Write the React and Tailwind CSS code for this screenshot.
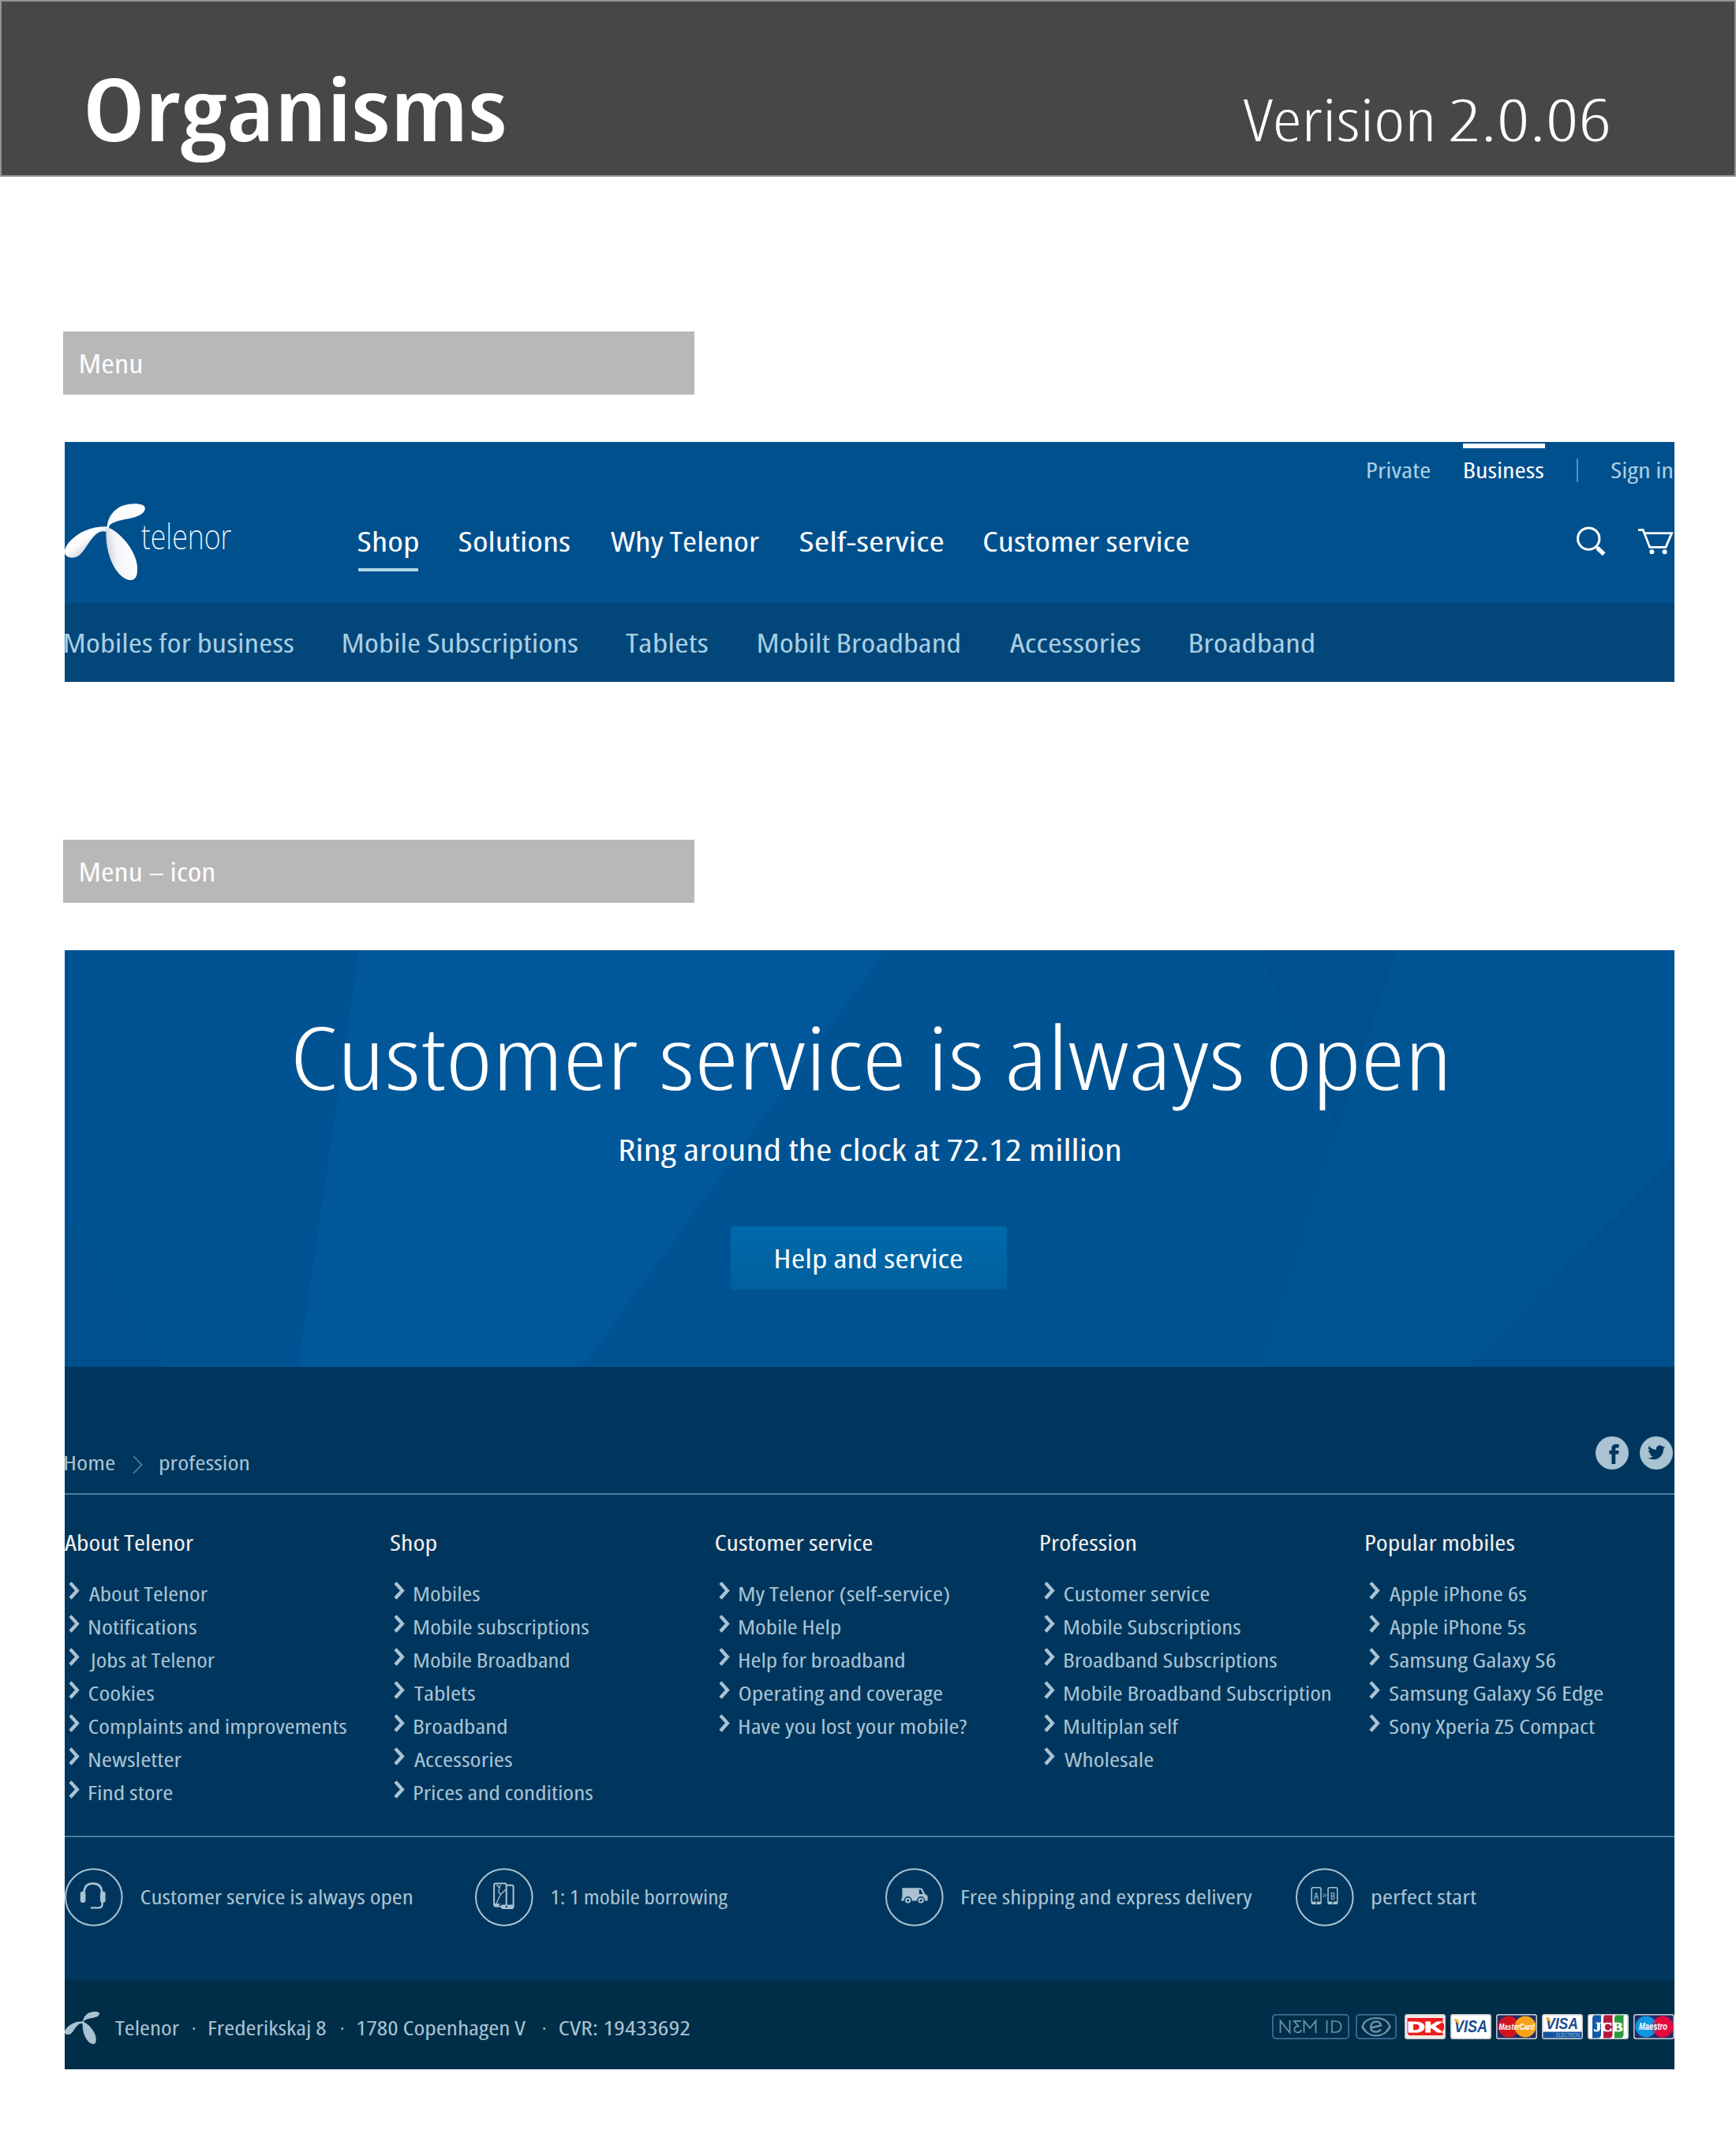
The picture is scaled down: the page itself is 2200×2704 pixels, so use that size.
import { useLayoutEffect, useRef, useState } from "react";

/* Text set to an exact ink width: the glyph run is measured and condensed horizontally. */
function T({ w, dy = 1.5, children, className = "" }) {
  const ref = useRef(null);
  const [fit, setFit] = useState({ x: 0, s: 1 });
  useLayoutEffect(() => {
    const cs = getComputedStyle(ref.current);
    const ctx = document.createElement("canvas").getContext("2d");
    ctx.font = `${cs.fontWeight} 400px ${cs.fontFamily}`;
    ctx.fontStretch = "condensed";
    const m = ctx.measureText(children);
    const k = ref.current.getBoundingClientRect().width / ref.current.dataset.scale / m.width;
    const s = w / ((m.actualBoundingBoxLeft + m.actualBoundingBoxRight) * k);
    setFit({ x: m.actualBoundingBoxLeft * k * s, s });
  }, [w, children]);
  return (
    <span className={`block shrink-0 whitespace-nowrap ${className}`} style={{ width: w }}>
      <span
        ref={ref}
        data-scale={fit.s}
        className="inline-block origin-left align-top"
        style={{ transform: `translate(${fit.x}px, ${dy}px) scaleX(${fit.s})` }}
      >
        {children}
      </span>
    </span>
  );
}

const MAIN = [
  ["Shop", 76],
  ["Solutions", 140],
  ["Why Telenor", 188],
  ["Self-service", 181],
  ["Customer service", 259],
];

const SUB = [
  ["Mobiles for business", 290, ""],
  ["Mobile Subscriptions", 297, "ml-[63px]"],
  ["Tablets", 104, "ml-[61px]"],
  ["Mobilt Broadband", 255, "ml-[64px]"],
  ["Accessories", 165, "ml-[64px]"],
  ["Broadband", 157, "ml-[63px]"],
];

const COLUMNS = [
  ["About Telenor", 163, [["About Telenor", 150], ["Notifications", 136], ["Jobs at Telenor", 159], ["Cookies", 82], ["Complaints and improvements", 326], ["Newsletter", 117], ["Find store", 105]]],
  ["Shop", 58, [["Mobiles", 83], ["Mobile subscriptions", 221], ["Mobile Broadband", 196], ["Tablets", 77], ["Broadband", 117], ["Accessories", 124], ["Prices and conditions", 226]]],
  ["Customer service", 198, [["My Telenor (self-service)", 266], ["Mobile Help", 128], ["Help for broadband", 209], ["Operating and coverage", 257], ["Have you lost your mobile?", 288]]],
  ["Profession", 120, [["Customer service", 183], ["Mobile Subscriptions", 223], ["Broadband Subscriptions", 269], ["Mobile Broadband Subscription", 337], ["Multiplan self", 145], ["Wholesale", 112]]],
  ["Popular mobiles", 188, [["Apple iPhone 6s", 173], ["Apple iPhone 5s", 172], ["Samsung Galaxy S6", 210], ["Samsung Galaxy S6 Edge", 270], ["Sony Xperia Z5 Compact", 260]]],
];

function Helix({ className, shaded }) {
  const a = shaded ? "url(#petalLeft)" : "currentColor";
  const b = shaded ? "url(#petalDown)" : "currentColor";
  const c = shaded ? "#fbfcfe" : "currentColor";
  return (
    <svg className={className} viewBox="43 294 200 291" preserveAspectRatio="none">
      <defs>
        <linearGradient id="petalLeft" x1="0.2" y1="0.2" x2="0.75" y2="0.7">
          <stop offset="0.45" stopColor="#fdfdfe" />
          <stop offset="1" stopColor="#c3c8d3" />
        </linearGradient>
        <linearGradient id="petalDown" x1="0" y1="0.55" x2="0.9" y2="0.35">
          <stop offset="0" stopColor="#c4c9d6" />
          <stop offset="0.35" stopColor="#f3f4f8" />
          <stop offset="1" stopColor="#ffffff" />
        </linearGradient>
      </defs>
      <path fill={c} d="M148 388C149 352 160 325 180 307C200 291 232 291 240 303C247 315 240 332 224 342C204 355 166 356 154 378L153 388Z" />
      <path fill={a} d="M152 382C134 380 112 384 92 398C68 414 46 447 43 472C41 490 50 500 62 500C76 500 84 486 93 466C106 437 115 413 130 402C138 398 146 399 152 406Z" />
      <path fill={b} d="M146 388C144 432 149 488 164 530C175 562 192 584 206 585C222 585 225 560 223 530C220 482 190 415 155 388Z" />
    </svg>
  );
}

function Chevron() {
  return (
    <svg className="mt-[7px] ml-[5px] h-[23px] w-[25px] shrink-0" viewBox="0 0 25 23">
      <path d="M2 1.6L10.8 11.4L2 21.2" fill="none" stroke="#a9c3d3" strokeWidth="4.4" />
    </svg>
  );
}

function SectionLabel({ text, w }) {
  return (
    <div className="h-20 w-[800px] bg-[#b8b8b8] pl-[22px] text-[33px] leading-[78px] text-white">
      <T w={w}>{text}</T>
    </div>
  );
}

function Service({ label, w, children }) {
  return (
    <div className="flex w-[520px] shrink-0">
      <svg className="size-[74px] shrink-0" viewBox="0.6 0 74 74" fill="none" stroke="#a9c3d3">
        <circle cx="37.4" cy="37" r="35.8" strokeWidth="2" />
        {children}
      </svg>
      <T w={w} dy={1} className="ml-[23px] text-[24.6px] leading-[71px]">{label}</T>
    </div>
  );
}

function Card({ children, className = "" }) {
  return (
    <svg className={`h-8 w-[52px] shrink-0 ${className}`} viewBox="0 0 52 32">
      <rect x="0.8" y="0.8" width="50.4" height="30.4" rx="2.5" fill="#fff" stroke="#c5c8ca" strokeWidth="1.6" />
      {children}
    </svg>
  );
}

const sans = "font-['Open_Sans','Noto_Sans',sans-serif]";

export default function App() {
  return (
    <div className={`${sans} h-[2704px] w-[2200px] bg-white [font-stretch:75%]`}>
      <header className="flex h-[224px] items-start justify-between border-2 border-[#949494] bg-[#474747] pr-[159px] pl-[107px] text-white">
        <T w={530} dy={1} className="mt-[66px] text-[110px] leading-[134px] font-[650]">Organisms</T>
        <div className="mt-[97px] flex gap-6 text-[74px] leading-[100px] font-light">
          <T w={238}>Verision</T>
          <T w={201}>2.0.06</T>
        </div>
      </header>

      <main className="pt-[196px] pl-20">
        <SectionLabel text="Menu" w={77} />

        <section className="mt-[60px] ml-0.5 w-[2040px]">
          <div className="h-[204px] bg-[#01508e] pt-0.5">
            <div className="flex h-[58px] justify-end pr-[3px] text-[26.5px] leading-[52px] text-[#a9cfe2]">
              <T w={79} className="mt-1.5">Private</T>
              <div className="ml-[42px] w-[104px] border-t-6 border-white pl-0.5 text-white">
                <T w={100}>Business</T>
              </div>
              <div className="mt-[19px] ml-10 h-[30px] w-0.5 bg-[#4499cc]" />
              <T w={77} className="mt-1.5 ml-[42px]">Sign in</T>
            </div>
            <div className="flex items-start">
              <Helix shaded className="mt-[18px] h-[97px] w-[102px] shrink-0" />
              <T w={114} dy={0} className="mt-[22px] -ml-[5px] text-[45px] leading-[74px] text-white [font-weight:250] font-['Noto_Sans','Open_Sans',sans-serif]">telenor</T>
              <nav className="mt-[30px] ml-[161px] flex gap-[52px] text-[34px] leading-[70px] text-white">
                {MAIN.map(([t, w], i) => (
                  <div key={t} className={i === 0 ? "border-b-4 border-[#b3d6e6]" : ""}>
                    <T w={w} dy={0.5}>{t}</T>
                  </div>
                ))}
              </nav>
              <svg className="mt-[46px] ml-auto h-10 w-[40px]" viewBox="0 0 40 40" fill="none" stroke="#fff">
                <ellipse cx="17.2" cy="16.6" rx="13.7" ry="13.7" strokeWidth="3" />
                <path d="M26.5 26.3L29.500 29.300" strokeWidth="3" />
                <path d="M28.300 28.300L36.700 36.300" strokeWidth="5.4" />
              </svg>
              <svg className="mt-[46px] mr-0 ml-[38px] h-10 w-[48px]" viewBox="0 0 48 40" fill="none" stroke="#fff" strokeWidth="2.8">
                <path d="M2 5.5H8.2L16.8 27.4H37L44.6 9.6H10" />
                <circle cx="19.4" cy="33.2" r="3" fill="#fff" stroke="none" />
                <circle cx="35.6" cy="33.2" r="3" fill="#fff" stroke="none" />
              </svg>
            </div>
          </div>
          <nav className="flex h-[100px] bg-[#03467a] text-[32.5px] leading-[98px] text-[#a9cfe2]">
            {SUB.map(([t, w, c]) => (
              <T key={t} w={w} className={c}>{t}</T>
            ))}
          </nav>
        </section>

        <div className="mt-[200px]">
          <SectionLabel text="Menu – icon" w={169} />
        </div>

        <section className="mt-[60px] ml-0.5 w-[2040px]">
          <div className="relative flex h-[528px] flex-col items-center bg-[#005392] pt-[73px] text-white">
            <svg className="absolute inset-0 size-full" viewBox="0 0 2040 528">
              <path fill="#005799" d="M373 0H1040L656 528H296Z" />
              <path fill="#00508e" d="M0 340L124 528H0Z" />
              <path fill="#00508e" d="M1513 0H1687L1614 227Z" />
              <path fill="#005494" d="M1687 0H2040V262L1780 528H1520L1614 227Z" />
              <path fill="#00508e" d="M2040 262V528H1780Z" />
            </svg>
            <h1 className="relative">
              <T w={1457} dy={0.5} className="text-[111px] leading-[120px] font-light">Customer service is always open</T>
            </h1>
            <p className="relative mt-8">
              <T w={633} className="text-[39px] leading-[50px]">Ring around the clock at 72.12 million</T>
            </p>
            <div className="relative mt-[75px] mr-[3px] flex h-20 w-[350px] justify-center rounded-[4px] bg-linear-to-b from-[#006aab] to-[#00609d]">
              <T w={236} className="text-[33px] leading-[78px]">Help and service</T>
            </div>
          </div>

          <footer className="bg-[#00365d] text-[#a9c3d3]">
            <div className="flex h-[162px] items-start border-b-2 border-[#4a7d9d]">
              <T w={63} className="mt-[100px] text-[24.5px] leading-10">Home</T>
              <svg className="mt-[112px] ml-[23px] h-6 w-[13px]" viewBox="0 0 13 24">
                <path d="M1.2 1.2L11.5 12L1.2 22.8" fill="none" stroke="#4a7d9d" strokeWidth="1.8" />
              </svg>
              <T w={112} className="mt-[100px] ml-[22px] text-[24.5px] leading-10">profession</T>
              <svg className="mt-[88px] mr-3.5 ml-auto size-[42px]" viewBox="0 0 42 42">
                <circle cx="21" cy="21" r="21" fill="#a9c3d3" />
                <path fill="#00365d" d="M20.4 35V22.6H17.4V18H20.4V15.2C20.4 11.6 22.5 10 26 10H29.6V14.6H27C25.6 14.6 25.2 15.2 25.2 16.4V18H29.6L29.1 22.6H25.2V35Z" />
              </svg>
              <svg className="mt-[88px] mr-0.5 size-[42px]" viewBox="0 0 42 42">
                <circle cx="21" cy="21" r="21" fill="#a9c3d3" />
                <path fill="#00365d" transform="translate(10.2 9.4) scale(0.92)" d="M24 4.6a10 10 0 0 1-2.8.8 5 5 0 0 0 2.1-2.7 10 10 0 0 1-3.1 1.2 4.9 4.9 0 0 0-8.4 4.5A14 14 0 0 1 1.7 3.2a4.9 4.9 0 0 0 1.5 6.5 5 5 0 0 1-2.2-.6v.1a4.9 4.9 0 0 0 3.9 4.8 5 5 0 0 1-2.2.1 4.9 4.9 0 0 0 4.6 3.4A10 10 0 0 1 0 19.5 14 14 0 0 0 7.5 21.7 14 14 0 0 0 21.5 7.1 10 10 0 0 0 24 4.6Z" />
              </svg>
            </div>

            <div className="flex h-[434px] border-b-2 border-[#4a7d9d] pt-10">
              {COLUMNS.map(([h, hw, items], i) => (
                <div key={h} className="w-[412px] shrink-0">
                  <T w={hw} dy={0.5} className={i === 0 ? "text-[26.5px] leading-10 text-[#f2efec]" : "ml-px text-[26.5px] leading-10 text-[#f2efec]"}>{h}</T>
                  <ul className="mt-[23px] text-[24.6px] leading-[42px]">
                    {items.map(([t, w]) => (
                      <li key={t} className="flex h-[42px]">
                        <Chevron />
                        <T w={w} className="ml-[0.5px]">{t}</T>
                      </li>
                    ))}
                  </ul>
                </div>
              ))}
            </div>

            <div className="flex h-[182px] pt-[39px]">
              <Service label="Customer service is always open" w={343}>
                <path d="M25.3 31C25.3 23 29.5 19.6 36.4 19.6C43.4 19.6 47.6 23 47.6 31" strokeWidth="2.6" />
                <rect x="20.4" y="29.5" width="6.6" height="14.5" rx="3.3" fill="#a9c3d3" stroke="none" />
                <rect x="45.6" y="29.5" width="6.6" height="14.5" rx="3.3" fill="#a9c3d3" stroke="none" />
                <path d="M48.2 43V46C48.2 49.5 46 50.4 43 50.4H33.5" strokeWidth="2.4" />
              </Service>
              <Service label="1: 1 mobile borrowing" w={223}>
                <rect x="24.7" y="19.4" width="15.6" height="29" rx="2.4" strokeWidth="2" />
                <path d="M24.500 45H33V49H24.500Z" fill="#a9c3d3" stroke="none" />
                <path d="M28 21L31.5 25L30.5 31L34 33.5M33 21.5L31.5 25M40 27L33 33.5L27.5 45" strokeWidth="1.3" />
                <path d="M41 21.700H46.500C48 21.700 49.200 22.600 49.200 24V48C49.200 49.800 48 51 46.500 51H37C35 51 34 50 34 48.500" strokeWidth="2" />
                <path d="M34 46.500H49V51.500H36Z" fill="#a9c3d3" stroke="none" />
                <circle cx="32" cy="46.8" r="1.2" fill="#00365d" stroke="none" />
                <circle cx="40.5" cy="49" r="1.2" fill="#00365d" stroke="none" />
              </Service>
              <Service label="Free shipping and express delivery" w={368}>
                <path d="M22 25.2H44.5C46.5 25.2 47.5 26 48.2 27.4L50.5 32.5L53 34.2C54 35 54.2 35.5 54.2 37V41.5H20.8V38.5H22Z" fill="#a9c3d3" stroke="none" />
                <path d="M43.4 27.2H45.5L48.3 33H43.4Z" fill="#00365d" stroke="none" />
                <circle cx="29.2" cy="41" r="4.3" fill="#a9c3d3" stroke="#00365d" strokeWidth="1.4" />
                <circle cx="45.7" cy="41" r="4.3" fill="#a9c3d3" stroke="#00365d" strokeWidth="1.4" />
                <circle cx="29.2" cy="41" r="1.6" fill="#00365d" stroke="none" />
                <circle cx="45.7" cy="41" r="1.6" fill="#00365d" stroke="none" />
              </Service>
              <Service label="perfect start" w={132}>
                <rect x="20.8" y="24.8" width="11.8" height="20.4" rx="2" strokeWidth="1.5" />
                <rect x="41.6" y="24.8" width="11.8" height="20.4" rx="2" strokeWidth="1.5" />
                <path d="M21 42.5H32.5V46H21ZM41.8 42.5H53.3V46H41.8Z" fill="#a9c3d3" stroke="none" />
                <circle cx="26.7" cy="44" r="1" fill="#00365d" stroke="none" />
                <circle cx="47.5" cy="44" r="1" fill="#00365d" stroke="none" />
                <path d="M35.2 32.5L36.9 34.6L35.2 36.7M37.7 32.5L39.4 34.6L37.7 36.7" strokeWidth="1" />
                <text x="26.7" y="39.5" fontSize="12.5" textAnchor="middle" fill="#a9c3d3" stroke="none">A</text>
                <text x="47.5" y="39.5" fontSize="12.5" textAnchor="middle" fill="#a9c3d3" stroke="none">B</text>
              </Service>
            </div>

            <div className="flex h-28 items-start bg-[#002e48] text-[24.6px]">
              <Helix className="mt-[39px] h-[41px] w-11 shrink-0" />
              <div className="mt-[38px] flex leading-10">
                <T w={81} className="ml-5">Telenor</T>
                <T w={3} className="ml-[17px]">·</T>
                <T w={148} className="ml-[18px]">Frederikskaj 8</T>
                <T w={3} className="ml-[19px]">·</T>
                <T w={213} className="ml-[18px]">1780 Copenhagen V</T>
                <T w={3} className="ml-[22px]">·</T>
                <T w={165} className="ml-[18px]">CVR: 19433692</T>
              </div>
              <div className="mt-[42px] ml-auto flex">
                <svg className="h-8 w-[98px] shrink-0" viewBox="0 0 98 32" fill="none" stroke="#6d93ac" strokeWidth="1.7">
                  <rect x="0.9" y="0.9" width="96.2" height="30.2" rx="4" stroke="#3f7093" />
                  <path d="M10.5 24V8.5L22.5 23.5V8M40.5 24V8.5L48 18L55.5 8.5V24M69.5 8V24M76 9V23H80C85 23 87.5 20 87.5 16C87.5 12 85 9 80 9Z" />
                  <path d="M37 8.8H28L33.5 15.4C26.500 16 27 23.300 32.500 23.300C35.200 23.300 36.600 22.300 37 20" />
                </svg>
                <svg className="ml-2 h-8 w-[52px] shrink-0" viewBox="0 0 52 32" fill="none" stroke="#6d93ac">
                  <rect x="0.9" y="0.9" width="50.2" height="30.2" rx="4" stroke="#3f7093" strokeWidth="1.7" />
                  <path d="M10 12C14 7 20 5 26 5C32 5 38 7 42 12" strokeWidth="2.2" />
                  <path d="M8 16C13 25 20 27.3 26 27.3C32 27.3 39 25 44 16" strokeWidth="2.2" />
                  <path d="M12 9.5L8.5 16L13 22M40 9.5L43.5 16L39 22" strokeWidth="2.2" />
                  <path d="M19 17.5L32 14.5C31.5 11 29 9.5 26 9.5C22 9.5 19 12.5 19 16.5C19 20.5 22 22.6 25.5 22.6C28 22.6 30.5 21.5 32 19.5" strokeWidth="2.4" />
                </svg>
                <Card className="ml-2.5">
                  <rect x="1.6" y="1.6" width="48.8" height="28.8" rx="2" fill="#efe9e6" />
                  <path d="M3.5 5H48.5V11.5L50 13V19L48.5 20.5V27H5.5L3.5 24Z" fill="#ee1c1c" />
                  <text x="3.500" y="22.500" fontSize="18" fontWeight="700" fill="#fff" stroke="#fff" strokeWidth="1.200" textLength="44" lengthAdjust="spacingAndGlyphs" className="font-['Liberation_Sans',sans-serif]">DK</text>
                </Card>
                <Card className="ml-1.5">
                  <text x="5" y="22.5" fontSize="22" fontWeight="700" fontStyle="italic" fill="#1a4a94" textLength="42" lengthAdjust="spacingAndGlyphs" className="font-['Liberation_Sans',sans-serif]">VISA</text>
                  <path d="M4 6.500H9.500L12 14.500Z" fill="#f0b01f" />
                </Card>
                <Card className="ml-1.5">
                  <rect x="1.5" y="1.5" width="49" height="29" rx="2" fill="#1f2a66" />
                  <circle cx="16" cy="16" r="13.5" fill="#d4141c" />
                  <circle cx="37" cy="16" r="13.5" fill="#f6a31a" />
                  <text x="3.5" y="20" fontSize="11" fontWeight="700" fontStyle="italic" fill="#fff" textLength="45" lengthAdjust="spacingAndGlyphs" className="font-['Liberation_Sans',sans-serif]">MasterCard</text>
                </Card>
                <Card className="ml-1.5">
                  <rect x="1.5" y="22.5" width="49" height="8" fill="#14539f" />
                  <text x="18" y="29.3" fontSize="7" fill="#9db9d9" textLength="30" lengthAdjust="spacingAndGlyphs" className="font-['Liberation_Sans',sans-serif]">ELECTRON</text>
                  <text x="5" y="19" fontSize="20" fontWeight="700" fontStyle="italic" fill="#1a4a94" textLength="41" lengthAdjust="spacingAndGlyphs" className="font-['Liberation_Sans',sans-serif]">VISA</text>
                  <path d="M4 4.500H9.500L12 12Z" fill="#f0b01f" />
                </Card>
                <Card className="ml-1.5">
                  <path d="M9 1.5H17V26C17 29 15 30.5 12 30.5H6V6C6 3 7 1.5 9 1.5Z" fill="#1259a8" />
                  <path d="M22.5 1.5H31.5V26C31.5 29 29.5 30.5 27 30.5H20V6C20 3 20.5 1.5 22.5 1.5Z" fill="#b5173f" />
                  <path d="M36.5 1.5H45.5V26C45.5 29 43.5 30.5 41 30.5H34V6C34 3 34.5 1.5 36.5 1.5Z" fill="#2b9a3b" />
                  <text x="7.5" y="21.5" fontSize="16" fontWeight="700" fill="#fff" stroke="#fff" strokeWidth="0.6" textLength="37" lengthAdjust="spacingAndGlyphs" className="font-['Liberation_Serif',serif]">JCB</text>
                </Card>
                <Card className="ml-1.5">
                  <rect x="1.5" y="1.5" width="49" height="29" rx="2" fill="#1f2a66" />
                  <circle cx="16" cy="16" r="13.5" fill="#0c97e0" />
                  <circle cx="37" cy="16" r="13.5" fill="#e4093c" />
                  <path d="M26.5 7.5A13.5 13.5 0 0 1 26.5 24.5A13.5 13.5 0 0 1 26.5 7.5Z" fill="#7a4c9c" />
                  <text x="7" y="20" fontSize="12" fontWeight="700" fontStyle="italic" fill="#fff" textLength="36" lengthAdjust="spacingAndGlyphs" className="font-['Liberation_Sans',sans-serif]">Maestro</text>
                </Card>
              </div>
            </div>
          </footer>
        </section>
      </main>
    </div>
  );
}
